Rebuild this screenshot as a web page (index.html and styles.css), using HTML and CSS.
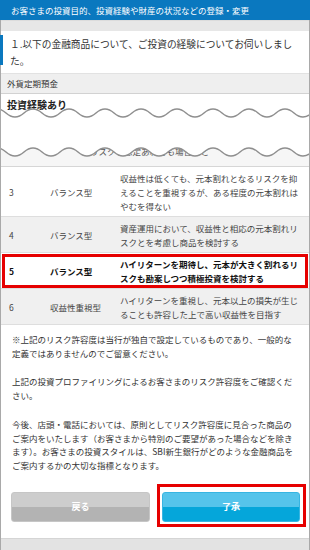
FILE: index.html
```html
<!DOCTYPE html>
<html lang="ja">
<head>
<meta charset="utf-8">
<link rel="stylesheet" href="styles.css">
</head>
<body>
<div class="page">
  <div class="hdr">お客さまの投資目的、投資経験や財産の状況などの登録・変更</div>
  <div class="main">
    <div class="band"></div>
    <div class="q"><span class="qbar"></span><p class="qtext">１.以下の金融商品について、ご投資の経験についてお伺いしました。</p></div>
    <div class="cat">外貨定期預金</div>
    <div class="torn">
      <div class="exp">投資経験あり</div>
      <div class="hidden-line">リスクも想定あれども場合でと</div>
      <svg class="cut" width="308" height="72" viewBox="0 0 308 72">
        <path fill="#fff" d="M-13 19 q9 -8 18 0 t18 0 t18 0 t18 0 t18 0 t18 0 t18 0 t18 0 t18 0 t18 0 t18 0 t18 0 t18 0 t18 0 t18 0 t18 0 t18 0 t18 0 t18 0 t18 0 L347 58 q-9 8 -18 0 t-18 0 t-18 0 t-18 0 t-18 0 t-18 0 t-18 0 t-18 0 t-18 0 t-18 0 t-18 0 t-18 0 t-18 0 t-18 0 t-18 0 t-18 0 t-18 0 t-18 0 t-18 0 t-18 0 Z"/>
        <path fill="none" stroke="#8e8e8e" stroke-width="1.5" d="M-13 19 q9 -8 18 0 t18 0 t18 0 t18 0 t18 0 t18 0 t18 0 t18 0 t18 0 t18 0 t18 0 t18 0 t18 0 t18 0 t18 0 t18 0 t18 0 t18 0 t18 0 t18 0"/>
        <path fill="none" stroke="#8e8e8e" stroke-width="1.5" d="M-13 58 q9 -8 18 0 t18 0 t18 0 t18 0 t18 0 t18 0 t18 0 t18 0 t18 0 t18 0 t18 0 t18 0 t18 0 t18 0 t18 0 t18 0 t18 0 t18 0 t18 0 t18 0"/>
      </svg>
    </div>
    <div class="rows">
      <div class="row"><span>3</span><span>バランス型</span><span>収益性は低くても、元本割れとなるリスクを抑えることを重視するが、ある程度の元本割れはやむを得ない</span></div>
      <div class="row alt"><span>4</span><span>バランス型</span><span>資産運用において、収益性と相応の元本割れリスクとを考慮し商品を検討する</span></div>
      <div class="row sel"><span>5</span><span>バランス型</span><span>ハイリターンを期待し、元本が大きく割れるリスクも勘案しつつ積極投資を検討する</span></div>
      <div class="row alt"><span>6</span><span>収益性重視型</span><span>ハイリターンを重視し、元本以上の損失が生じることも許容した上で高い収益性を目指す</span></div>
    </div>
    <div class="notes">
      <p>※上記のリスク許容度は当行が独自で設定しているものであり、一般的な定義ではありませんのでご留意ください。</p>
      <p>上記の投資プロファイリングによるお客さまのリスク許容度をご確認ください。</p>
      <p>今後、店頭・電話においては、原則としてリスク許容度に見合った商品のご案内をいたします（お客さまから特別のご要望があった場合などを除きます）。お客さまの投資スタイルは、SBI新生銀行がどのような金融商品をご案内するかの大切な指標となります。</p>
    </div>
    <div class="btns">
      <button class="btn back">戻る</button>
      <button class="btn ok">了承</button>
    </div>
    <div class="foot"></div>
  </div>
</div>
</body>
</html>
```

FILE: styles.css
```css
* { box-sizing: border-box; }
body {
  margin: 0;
  font-family: "Noto Sans CJK JP", "Noto Sans", sans-serif;
  background: #fff;
}
.page {
  width: 310px;
  height: 550px;
  overflow: hidden;
  display: flex;
  flex-direction: column;
}
.hdr {
  height: 20px;
  line-height: 20px;
  background: #0a78bf;
  color: #fff;
  font-size: 8.5px;
  padding-left: 11px;
  white-space: nowrap;
}
.main {
  flex: 1;
  display: flex;
  flex-direction: column;
  border-left: 1px solid #a9a9a9;
  border-right: 1px solid #a9a9a9;
}
.band {
  height: 11px;
  background: #e7e7e7;
  border-top: 1px solid #dcdcdc;
}
.q {
  display: flex;
  height: 42px;
}
.qbar {
  flex: none;
  width: 3px;
  margin: 4px 0 8px -1px;
  background: #0a78bf;
}
.qtext {
  margin: 0;
  padding: 5px 9px 0 7px;
  font-size: 9.7px;
  line-height: 17px;
  color: #333;
}
.cat {
  height: 21px;
  line-height: 19px;
  padding-left: 6px;
  font-size: 8.5px;
  color: #333;
  background: #efefef;
  border-top: 1px solid #e2e2e2;
  border-bottom: 1px solid #d2d2d2;
}
.torn {
  position: relative;
  height: 73px;
  border-bottom: 1px solid #d6d6d6;
  background: linear-gradient(#fff 0 55px, #f6f6f6 55px);
}
.exp {
  padding: 4px 0 0 6px;
  font-size: 10px;
  line-height: 14px;
  font-weight: bold;
  color: #222;
}
.hidden-line {
  margin-top: 32px;
  padding-left: 89px;
  font-size: 8.5px;
  line-height: 14px;
  color: #555;
  white-space: nowrap;
}
.cut {
  position: absolute;
  top: 0;
  left: 0;
}
.row {
  display: grid;
  grid-template-columns: 41px 70px 1fr;
  align-items: center;
  padding: 3.5px 7px 3.5px 8px;
  font-size: 8.5px;
  line-height: 14px;
  color: #444;
  border-bottom: 1px solid #dedede;
}
.row.alt { background: #f0f0f0; }
.row.sel {
  font-weight: bold;
  color: #111;
  outline: 3px solid #e60000;
  outline-offset: -4px;
}
.notes {
  padding: 8px 11px 0;
  font-size: 8.5px;
  line-height: 13.7px;
  color: #333;
}
.notes p { margin: 0 0 15px; }
.notes p:last-child { margin-bottom: 0; }
.btns {
  display: grid;
  grid-template-columns: 139px 138px;
  column-gap: 12px;
  padding: 0 9px 0 10px;
  margin-top: 19px;
}
.btn {
  height: 30px;
  border-radius: 3px;
  font-family: inherit;
  font-size: 9px;
  font-weight: bold;
  color: #fff;
  padding: 0;
}
.back {
  background: linear-gradient(#cdcdcd 50%, #b3b3b3 50%);
  border: 1px solid #c6c6c6;
}
.ok {
  position: relative;
  background: linear-gradient(#55c4eb 50%, #05a6da 50%);
  border: 1px solid #37b5e2;
}
.ok::after {
  content: "";
  position: absolute;
  top: -9px;
  left: -6px;
  right: -7px;
  bottom: -6px;
  border: 3px solid #e60000;
}
.foot {
  margin-top: auto;
  height: 12px;
  background: #e3e3e3;
  border-top: 1px solid #d5d5d5;
}
```
